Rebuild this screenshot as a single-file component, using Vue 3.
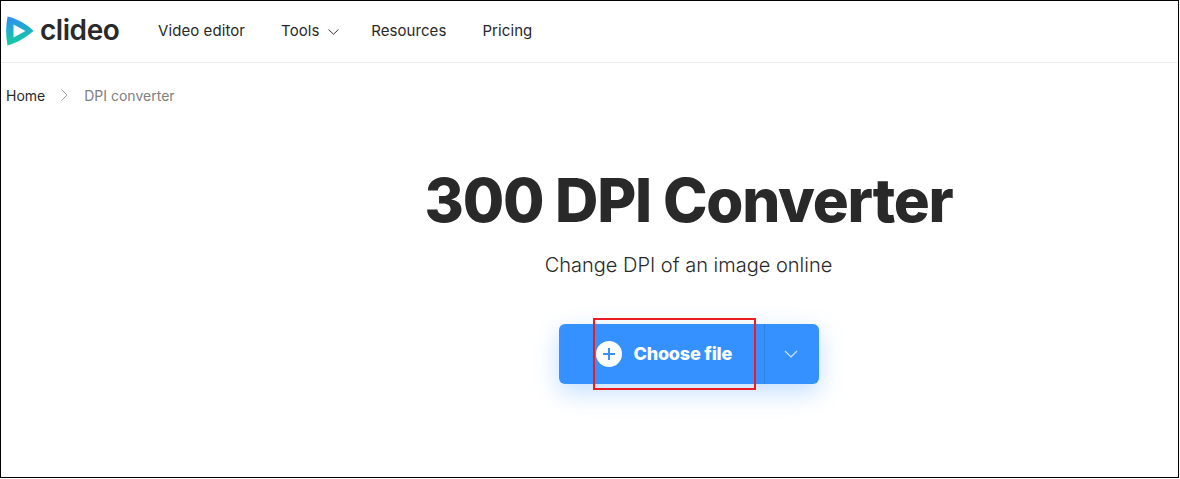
<script setup>
const navItems = [
  { label: 'Video editor' },
  { label: 'Tools', caret: true },
  { label: 'Resources' },
  { label: 'Pricing' },
];
</script>

<template>
  <div class="frame">
    <header class="header">
      <a class="logo">
        <svg class="logo-mark" width="28" height="30" viewBox="0 0 28 30">
          <defs>
            <linearGradient id="logoGrad" x1="0.3" y1="0" x2="0.4" y2="1">
              <stop offset="0" stop-color="#2d8ff5" />
              <stop offset="1" stop-color="#0fd197" />
            </linearGradient>
          </defs>
          <path d="M1.5 0.5 C12 3 21 8.5 27.5 15 C20 21 12 26.5 1.5 29.5 C-0.3 20 -0.3 10 1.5 0.5 Z" fill="url(#logoGrad)" />
          <path d="M7.5 8.5 L19.5 15 L7.5 21.5 Z" fill="#fff" />
        </svg>
        <span class="logo-text">clideo</span>
      </a>
      <nav class="nav">
        <a v-for="item in navItems" :key="item.label" class="nav-item">
          {{ item.label }}
          <svg v-if="item.caret" class="caret" width="11" height="6" viewBox="0 0 11 6">
            <path d="M0.5 0.5 L5.5 5.2 L10.5 0.5" fill="none" stroke="#333" stroke-width="1" />
          </svg>
        </a>
      </nav>
    </header>

    <div class="crumbs">
      <a class="crumb-home">Home</a>
      <svg class="crumb-sep" width="7" height="12" viewBox="0 0 7 12">
        <path d="M0.5 0.5 L6 6 L0.5 11.5" fill="none" stroke="#a5a5a5" stroke-width="1" />
      </svg>
      <span class="crumb-current">DPI converter</span>
    </div>

    <main class="hero">
      <h1 class="title">300 DPI Converter</h1>
      <p class="subtitle">Change DPI of an image online</p>
      <div class="upload">
        <button class="choose">
          <span class="plus">
            <svg width="12" height="12" viewBox="0 0 12 12">
              <path d="M6 0 V12 M0 6 H12" stroke="#3591ff" stroke-width="2" />
            </svg>
          </span>
          <span class="choose-label">Choose file</span>
        </button>
        <button class="more">
          <svg width="14" height="8" viewBox="0 0 14 8">
            <path d="M1 1 L7 7 L13 1" fill="none" stroke="#cfe4ff" stroke-width="1.2" />
          </svg>
        </button>
        <div class="highlight"></div>
      </div>
    </main>
  </div>
</template>

<style>
html,
body {
  margin: 0;
  background: #fff;
}
</style>

<style scoped>
.frame {
  width: 1179px;
  height: 478px;
  box-sizing: border-box;
  border: 1px solid #000;
  background: #fff;
  font-family: Inter, "Liberation Sans", sans-serif;
  color: #292929;
  overflow: hidden;
}

.header {
  display: flex;
  align-items: center;
  height: 61px;
  border-bottom: 1px solid #ebebeb;
  padding-left: 5px;
}

.logo {
  display: flex;
  align-items: center;
  width: 152px;
}

.logo-mark {
  margin-top: -1px;
}

.logo-text {
  margin-left: 6px;
  font-size: 28px;
  font-weight: 600;
  letter-spacing: -0.45px;
  color: #2a2a2a;
  line-height: 30px;
  margin-top: -3px;
}

.nav {
  display: flex;
  gap: 36px;
  margin-top: -2px;
}

.nav-item {
  display: flex;
  align-items: center;
  font-size: 15px;
  font-weight: 400;
  letter-spacing: 0.08px;
  color: #292929;
}

.caret {
  margin-left: 8px;
  margin-right: -3.4px;
  margin-top: 2px;
}

.crumbs {
  display: flex;
  align-items: center;
  height: 20px;
  margin-top: 22px;
  padding-left: 5px;
  font-size: 14px;
}

.crumb-sep {
  margin: 0 16px 0 16px;
}

.crumb-current {
  color: #808080;
}

.hero {
  display: flex;
  flex-direction: column;
  align-items: center;
  padding-left: 198px;
}

.title {
  margin: 59px 0 0;
  font-size: 60px;
  line-height: 72px;
  font-weight: 800;
  letter-spacing: -1.23px;
  color: #292929;
}

.subtitle {
  margin: 14px 0 0;
  font-size: 20px;
  line-height: 30px;
  font-weight: 300;
  color: #292929;
}

.upload {
  position: relative;
  display: flex;
  margin-top: 44px;
  height: 60px;
  border-radius: 6px;
  background: #3591ff;
  box-shadow: 0 8px 24px rgba(53, 145, 255, 0.3);
}

.choose,
.more {
  border: 0;
  background: transparent;
  padding: 0;
  display: flex;
  align-items: center;
  font-family: inherit;
}

.choose {
  width: 206px;
  box-sizing: border-box;
  padding-left: 37px;
  border-right: 1px solid #2d80e2;
  color: #fff;
  font-size: 18px;
  font-weight: 800;
  letter-spacing: -0.2px;
}

.choose-label {
  margin-top: -2px;
}

.plus {
  display: flex;
  align-items: center;
  justify-content: center;
  width: 26px;
  height: 26px;
  border-radius: 50%;
  background: #fff;
  margin-right: 12px;
}

.more {
  width: 54px;
  justify-content: center;
  padding-right: 2px;
}

.highlight {
  position: absolute;
  left: 34px;
  top: -6px;
  width: 163px;
  height: 72px;
  box-sizing: border-box;
  border: 2px solid #ed1c24;
  pointer-events: none;
}
</style>
